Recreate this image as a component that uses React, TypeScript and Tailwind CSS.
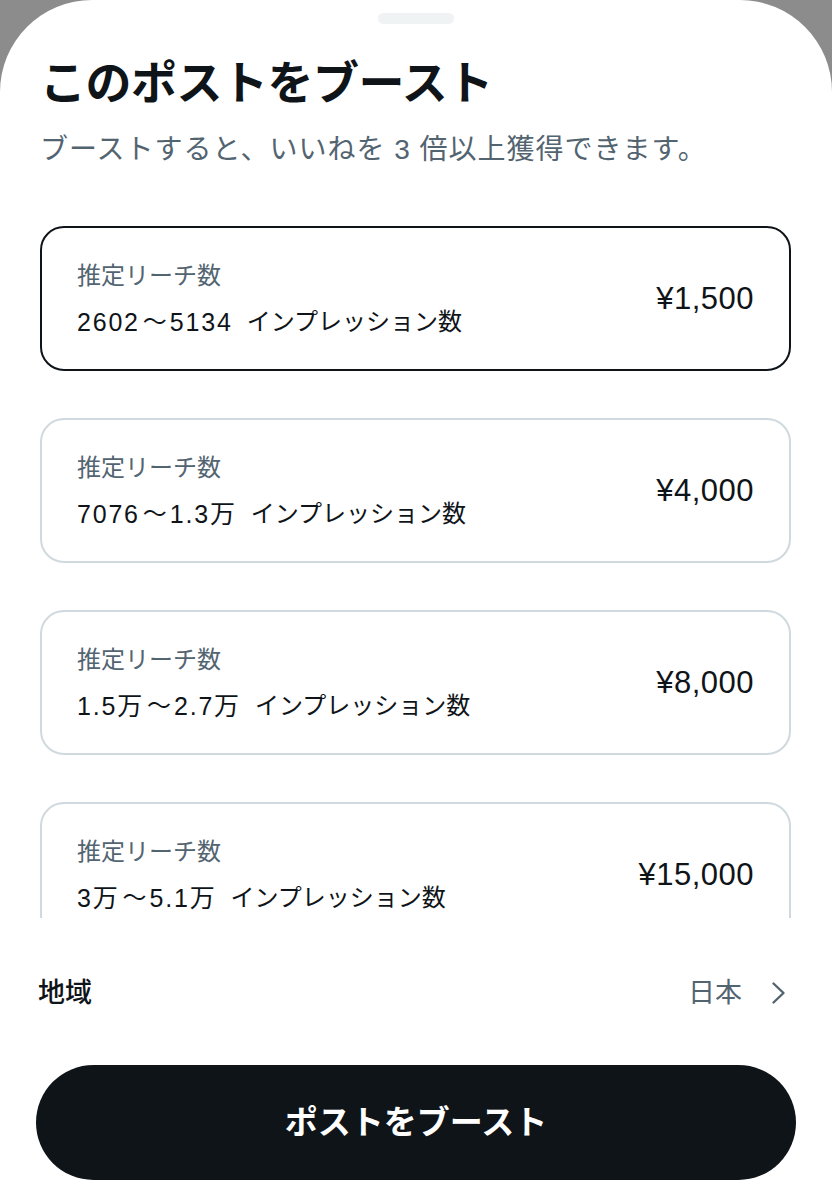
const plans = [
  { from: "2602", to: "5134", price: "¥1,500", selected: true },
  { from: "7076", to: "1.3万", price: "¥4,000", selected: false },
  { from: "1.5万", to: "2.7万", price: "¥8,000", selected: false },
  { from: "3万", to: "5.1万", price: "¥15,000", selected: false },
]

export default function App() {
  return (
    <div
      className="w-[832px] h-[1200px] bg-[#8c8c8c] overflow-hidden"
      style={{ fontFamily: '"Liberation Sans", "Noto Sans CJK JP", sans-serif' }}
    >
      <div className="h-full bg-white rounded-t-[92px] flex flex-col">
        <div className="mt-[13px] mx-auto h-[11px] w-[76px] rounded-full bg-[#eff3f4]" />

        <div className="px-[40px]">
          <h1 className="mt-[31px] text-[46px] leading-[56px] font-bold text-[#0f1419] tracking-[-0.5px]">
            このポストをブースト
          </h1>
          <p className="mt-[21px] text-[28px] leading-[36px] text-[#536471] tracking-[1px]">
            ブーストすると、いいねを 3 倍以上獲得できます。
          </p>
        </div>

        <div className="mt-[58px] h-[692px] overflow-hidden pl-[40px] pr-[41px] flex flex-col gap-[47px]">
          {plans.map((p) => (
            <div
              key={p.price}
              className={
                "shrink-0 h-[145px] rounded-[24px] border-2 px-[35px] flex items-center justify-between " +
                (p.selected ? "border-[#0f1419]" : "border-[#cfd9de]")
              }
            >
              <div className="flex flex-col gap-[16px]">
                <span className="text-[24px] leading-[30px] text-[#536471]">推定リーチ数</span>
                <span className="text-[24px] leading-[30px] text-[#0f1419] flex items-center">
                  <span className="text-[25px] tracking-[1.8px]">{p.from}</span>
                  <span className="mx-[3px]">〜</span>
                  <span className="text-[25px] tracking-[1.8px]">{p.to}</span>
                  <span className="ml-[14px]">インプレッション数</span>
                </span>
              </div>
              <span className="text-[31px] leading-[36px] text-[#0f1419] font-medium tracking-[0.5px]">{p.price}</span>
            </div>
          ))}
        </div>

        <div className="mt-[57px] pl-[38px] pr-[46px] flex items-center justify-between h-[36px]">
          <span className="text-[27px] leading-[36px] text-[#0f1419] font-medium">地域</span>
          <div className="flex items-center gap-[29px]">
            <span className="text-[27px] leading-[36px] text-[#536471]">日本</span>
            <svg width="15" height="24" viewBox="0 0 15 24" fill="none">
              <path d="M2.5 2.5 L12.5 12 L2.5 21.5" stroke="#536471" strokeWidth="2.4" strokeLinecap="round" strokeLinejoin="round" />
            </svg>
          </div>
        </div>

        <div className="mt-[54px] px-[36px]">
          <button className="w-full h-[115px] rounded-full bg-[#0f1419] text-white text-[33px] font-bold flex items-center justify-center">
            ポストをブースト
          </button>
        </div>
      </div>
    </div>
  )
}
